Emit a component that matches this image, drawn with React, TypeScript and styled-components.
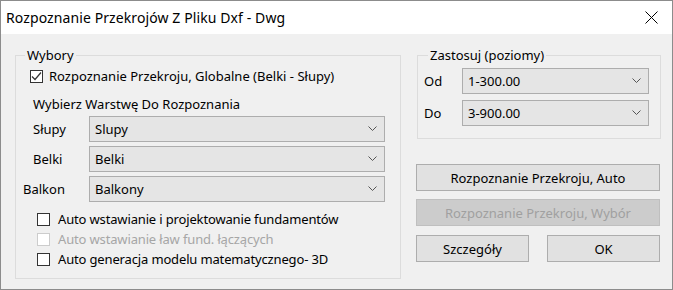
import styled, { createGlobalStyle } from 'styled-components';

const GlobalStyle = createGlobalStyle`
  html, body {
    margin: 0;
    padding: 0;
    background: #f0f0f0;
  }
  * {
    box-sizing: border-box;
  }
`;

const Window = styled.div`
  width: 673px;
  height: 290px;
  border: 1px solid #8c8c8c;
  background: #f0f0f0;
  display: flex;
  flex-direction: column;
  font-family: 'Noto Sans', 'Liberation Sans', sans-serif;
  font-size: 13px;
  color: #000;
`;

const TitleBar = styled.div`
  height: 33px;
  background: #fff;
  display: flex;
  align-items: center;
  justify-content: space-between;
  padding-left: 5px;
`;

const Title = styled.span`
  font-size: 14px;
  letter-spacing: 0.1px;
`;

const CloseButton = styled.div`
  width: 42px;
  height: 33px;
  display: flex;
  align-items: center;
  justify-content: center;
`;

const Body = styled.div`
  flex: 1;
  display: flex;
  gap: 15px;
  padding: 21px 0 0 14px;
`;

const GroupBox = styled.div<{ $width: number; $height: number; $shift?: number }>`
  position: relative;
  width: ${(p) => p.$width}px;
  height: ${(p) => p.$height}px;
  margin-left: ${(p) => p.$shift ?? 0}px;
  border: 1px solid #dcdcdc;
  display: flex;
  flex-direction: column;
`;

const Legend = styled.span<{ $left: number }>`
  position: absolute;
  top: -9px;
  left: ${(p) => p.$left}px;
  padding: 0 2px;
  line-height: 16px;
  background: #f0f0f0;
`;

const CheckRow = styled.label<{ $indent: number; $gap: number; $disabled?: boolean }>`
  display: flex;
  align-items: center;
  height: 20px;
  margin-left: ${(p) => p.$indent}px;
  gap: ${(p) => p.$gap}px;
  color: ${(p) => (p.$disabled ? '#a6a6a6' : '#000')};
  white-space: nowrap;
`;

const OptionText = styled.span`
  letter-spacing: -0.15px;
`;

const Box = styled.span<{ $disabled?: boolean }>`
  width: 13px;
  height: 13px;
  flex: none;
  border: 1px solid ${(p) => (p.$disabled ? '#cccccc' : '#333')};
  background: #fff;
  display: flex;
  align-items: center;
  justify-content: center;
`;

const Caption = styled.div`
  margin: 9px 0 0 17px;
  height: 18px;
  line-height: 18px;
`;

const LayerList = styled.div`
  margin-top: 3px;
  display: flex;
  flex-direction: column;
  gap: 4px;
`;

const FieldRow = styled.div`
  display: flex;
  align-items: center;
`;

const FieldLabel = styled.span<{ $indent: number; $width: number }>`
  width: ${(p) => p.$width}px;
  padding-left: ${(p) => p.$indent}px;
  flex: none;
`;

const Combo = styled.div<{ $width: number }>`
  width: ${(p) => p.$width}px;
  height: 26px;
  background: #e5e5e5;
  border: 1px solid #adadad;
  display: flex;
  align-items: center;
  justify-content: space-between;
  padding: 0 7px 0 5px;
`;

const Options = styled.div`
  margin-top: 7px;
  display: flex;
  flex-direction: column;
`;

const RightColumn = styled.div`
  display: flex;
  flex-direction: column;
  width: 244px;
`;

const ZoneList = styled.div`
  margin-top: 12px;
  display: flex;
  flex-direction: column;
  gap: 6px;
`;

const ButtonStack = styled.div`
  margin-top: 25px;
  display: flex;
  flex-direction: column;
  gap: 8px;
`;

const ButtonPair = styled.div`
  display: flex;
  justify-content: space-between;
  margin-top: 1px;
`;

const Button = styled.button<{ $width?: number }>`
  width: ${(p) => (p.$width ? `${p.$width}px` : '100%')};
  height: 27px;
  background: #e1e1e1;
  border: 1px solid #adadad;
  font: inherit;
  color: #000;
  padding: 0;

  &:disabled {
    background: #cccccc;
    border-color: #bfbfbf;
    color: #a0a0a0;
  }
`;

const Chevron = () => (
  <svg width="9" height="6" viewBox="0 0 9 6">
    <polyline points="0.5,0.5 4.5,4.5 8.5,0.5" fill="none" stroke="#555" strokeWidth="1" />
  </svg>
);

const layers = [
  { label: 'Słupy', value: 'Slupy', indent: 17 },
  { label: 'Belki', value: 'Belki', indent: 17 },
  { label: 'Balkon', value: 'Balkony', indent: 7 },
];

const options = [
  { text: 'Auto wstawianie i projektowanie fundamentów', disabled: false },
  { text: 'Auto wstawianie ław fund. łączących', disabled: true },
  { text: 'Auto generacja modelu matematycznego- 3D', disabled: false },
];

const zones = [
  { label: 'Od', value: '1-300.00' },
  { label: 'Do', value: '3-900.00' },
];

function App() {
  return (
    <>
      <GlobalStyle />
      <Window>
        <TitleBar>
          <Title>Rozpoznanie Przekrojów Z Pliku Dxf - Dwg</Title>
          <CloseButton>
            <svg width="13" height="13" viewBox="0 0 13 13">
              <path d="M0.5 0.5 L12.5 12.5 M12.5 0.5 L0.5 12.5" stroke="#000" strokeWidth="1" />
            </svg>
          </CloseButton>
        </TitleBar>
        <Body>
          <GroupBox $width={386} $height={224}>
            <Legend $left={9}>Wybory</Legend>
            <CheckRow $indent={14} $gap={6} style={{ marginTop: 10 }}>
              <Box>
                <svg width="11" height="11" viewBox="0 0 11 11">
                  <polyline points="1,5.5 4,8.5 10,1.5" fill="none" stroke="#333" strokeWidth="1.2" />
                </svg>
              </Box>
              Rozpoznanie Przekroju, Globalne (Belki - Słupy)
            </CheckRow>
            <Caption>Wybierz Warstwę Do Rozpoznania</Caption>
            <LayerList>
              {layers.map((l) => (
                <FieldRow key={l.label}>
                  <FieldLabel $indent={l.indent} $width={73}>{l.label}</FieldLabel>
                  <Combo $width={296}>
                    {l.value}
                    <Chevron />
                  </Combo>
                </FieldRow>
              ))}
            </LayerList>
            <Options>
              {options.map((o) => (
                <CheckRow key={o.text} $indent={21} $gap={8} $disabled={o.disabled}>
                  <Box $disabled={o.disabled} />
                  <OptionText>{o.text}</OptionText>
                </CheckRow>
              ))}
            </Options>
          </GroupBox>
          <RightColumn>
            <GroupBox $width={244} $height={84} $shift={1}>
              <Legend $left={10}>Zastosuj (poziomy)</Legend>
              <ZoneList>
                {zones.map((z) => (
                  <FieldRow key={z.label}>
                    <FieldLabel $indent={6} $width={44}>{z.label}</FieldLabel>
                    <Combo $width={187}>
                      {z.value}
                      <Chevron />
                    </Combo>
                  </FieldRow>
                ))}
              </ZoneList>
            </GroupBox>
            <ButtonStack>
              <Button>Rozpoznanie Przekroju, Auto</Button>
              <Button disabled>Rozpoznanie Przekroju, Wybór</Button>
              <ButtonPair>
                <Button $width={113}>Szczegóły</Button>
                <Button $width={113}>OK</Button>
              </ButtonPair>
            </ButtonStack>
          </RightColumn>
        </Body>
      </Window>
    </>
  );
}

export default App;
